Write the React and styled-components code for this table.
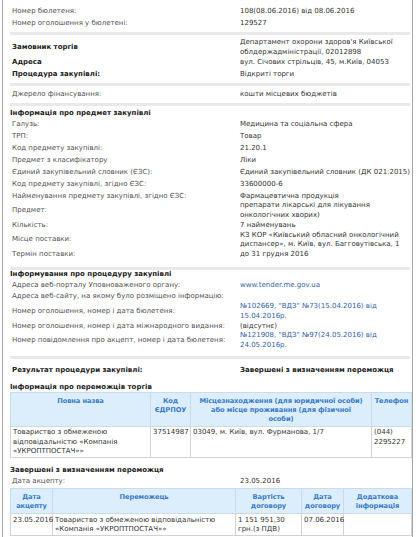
import React from 'react';
import styled, { createGlobalStyle } from 'styled-components';

const Global = createGlobalStyle`
  html, body { margin: 0; padding: 0; background: #fff; }
  body {
    font-family: "DejaVu Sans", Verdana, sans-serif;
    font-size: 7px;
    color: #333;
  }
`;

const Frame = styled.div`
  box-sizing: border-box;
  margin-left: 2px;
  width: 411px;
  min-height: 537px;
  border-left: 1px solid #a6a6a6;
  border-right: 1px solid #a6a6a6;
  padding: 6px 1px 0 7px;
`;

const Fields = styled.div`
  display: grid;
  grid-template-columns: 230px 1fr;
  line-height: 9.6px;
  padding-top: ${p => p.$pt || 0}px;
`;

const Label = styled.div`
  align-self: center;
  padding: 1.2px 0 1.2px 2px;
  white-space: nowrap;
  color: ${p => (p.$strong ? '#222' : '#505050')};
  font-weight: ${p => (p.$strong ? 'bold' : 'normal')};
`;

const Value = styled.div`
  padding: ${p => (p.$multi ? '0' : '1.2px')} 0;
  margin: ${p => (p.$multi && p.$tight ? '-1px' : '0')} 0;
  white-space: nowrap;
  color: ${p => (p.$link ? '#2f64a6' : p.$strong ? '#222' : '#333')};
  font-weight: ${p => (p.$strong ? 'bold' : 'normal')};
`;

const Sep = styled.div`
  height: 3px;
  background: #e9e9e9;
  margin: ${p => p.$mt ?? 2}px 1px ${p => p.$mb ?? 0}px 0;
`;

const Title = styled.div`
  font-weight: bold;
  color: #222;
  line-height: 9.6px;
  white-space: nowrap;
  padding-top: ${p => p.$pt || 0}px;
`;

const Table = styled.table`
  width: 401px;
  border-collapse: collapse;
  table-layout: fixed;
`;

const Th = styled.th`
  background: #dcedfb;
  color: #3b7cc6;
  font-weight: bold;
  font-size: 6.7px;
  text-align: center;
  vertical-align: top;
  white-space: nowrap;
  letter-spacing: -0.1px;
  line-height: 9px;
  padding: 4px 0 2px;
  border: 1px solid #c9dcec;
`;

const Td = styled.td`
  vertical-align: top;
  text-align: left;
  line-height: 9.6px;
  padding: ${p => p.$pt ?? 1}px 2px 0;
  border: 1px solid #d3d3d3;
  color: #333;
  white-space: nowrap;
`;

const Lines = ({ lines }) =>
  lines.map((l, i) => (
    <React.Fragment key={i}>
      {i > 0 && <br />}
      {l}
    </React.Fragment>
  ));

const Row = ({ label, value, strong, strongValue, link, tight }) => {
  const lines = Array.isArray(value) ? value : [value];
  return (
    <>
      <Label $strong={strong}>{label}</Label>
      <Value $multi={lines.length > 1} $tight={tight} $link={link} $strong={strongValue}>
        <Lines lines={lines} />
      </Value>
    </>
  );
};

const subjectRows = [
  ['Галузь:', 'Медицина та соціальна сфера'],
  ['ТРП:', 'Товар'],
  ['Код предмету закупівлі:', '21.20.1'],
  ['Предмет з класифікатору', 'Ліки'],
  ['Єдиний закупівельний словник (ЄЗС):', 'Єдиний закупівельний словник (ДК 021:2015)'],
  ['Код предмету закупівлі, згідно ЄЗС:', '33600000-6'],
  ['Найменування предмету закупівлі, згідно ЄЗС:', 'Фармацевтична продукція'],
  ['Предмет:', ['препарати лікарські для лікування', 'онкологічних хворих)']],
  ['Кількість:', '7 найменувань'],
  [
    'Місце поставки:',
    ['КЗ КОР «Київський обласний онкологічний', 'диспансер», м. Київ, вул. Багговутівська, 1'],
  ],
  ['Термін поставки:', 'до 31 грудня 2016'],
];

const infoRows = [
  ['Адреса веб-порталу Уповноваженого органу:', 'www.tender.me.gov.ua', true],
  ['Адреса веб-сайту, на якому було розміщено інформацію:', ''],
  [
    'Номер оголошення, номер і дата бюлетеня:',
    ['№102669, "ВДЗ" №73(15.04.2016) від', '15.04.2016р.'],
    true,
  ],
  ['Номер оголошення, номер і дата міжнародного видання:', '(відсутнє)'],
  [
    'Номер повідомлення про акцепт, номер і дата бюлетеня:',
    ['№121908, "ВДЗ" №97(24.05.2016) від', '24.05.2016р.'],
    true,
  ],
];

export default function App() {
  return (
    <>
      <Global />
      <Frame>
        <Fields>
          <Row label="Номер бюлетеня:" value="108(08.06.2016) від 08.06.2016" />
          <Row label="Номер оголошення у бюлетені:" value="129527" />
        </Fields>
        <Sep $mb={3} />
        <Fields>
          <Row
            strong
            label="Замовник торгів"
            value={["Департамент охорони здоров'я Київської", 'облдержадміністрації, 02012898']}
          />
          <Row strong label="Адреса" value="вул. Січових стрільців, 45, м.Київ, 04053" />
          <Row strong label="Процедура закупівлі:" value="Відкриті торги" />
        </Fields>
        <Sep $mb={3} />
        <Fields>
          <Row label="Джерело фінансування:" value="кошти місцевих бюджетів" />
        </Fields>
        <Sep />
        <Title $pt={3}>Інформація про предмет закупівлі</Title>
        <Fields>
          {subjectRows.map(([l, v]) => (
            <Row key={l} tight label={l} value={v} />
          ))}
        </Fields>
        <Sep $mt={6} />
        <Title>Інформування про процедуру закупівлі</Title>
        <Fields>
          {infoRows.map(([l, v, link]) => (
            <Row key={l} tight label={l} value={v} link={link} />
          ))}
        </Fields>
        <Sep $mt={6} />
        <Fields $pt={6}>
          <Row
            strong
            strongValue
            label="Результат процедури закупівлі:"
            value="Завершені з визначенням переможця"
          />
        </Fields>
        <Title $pt={6}>Інформація про переможців торгів</Title>
        <Table>
          <colgroup>
            <col style={{ width: 140 }} />
            <col style={{ width: 40 }} />
            <col style={{ width: 181 }} />
            <col style={{ width: 40 }} />
          </colgroup>
          <thead>
            <tr>
              <Th>Повна назва</Th>
              <Th>
                Код
                <br />
                ЄДРПОУ
              </Th>
              <Th>
                Місцезнаходження (для юридичної особи)
                <br />
                або місце проживання (для фізичної
                <br />
                особи)
              </Th>
              <Th>Телефон</Th>
            </tr>
          </thead>
          <tbody>
            <tr>
              <Td>
                Товариство з обмеженою
                <br />
                відповідальністю «Компанія
                <br />
                «УКРОПТПОСТАЧ»»
              </Td>
              <Td>37514987</Td>
              <Td>03049, м. Київ, вул. Фурманова, 1/7</Td>
              <Td>
                (044)
                <br />
                2295227
              </Td>
            </tr>
          </tbody>
        </Table>
        <Title $pt={8}>Завершені з визначенням переможця</Title>
        <Fields>
          <Row label="Дата акцепту:" value="23.05.2016" />
        </Fields>
        <Table>
          <colgroup>
            <col style={{ width: 42 }} />
            <col style={{ width: 183 }} />
            <col style={{ width: 66 }} />
            <col style={{ width: 42 }} />
            <col style={{ width: 68 }} />
          </colgroup>
          <thead>
            <tr>
              <Th>
                Дата
                <br />
                акцепту
              </Th>
              <Th>Переможець</Th>
              <Th>
                Вартість
                <br />
                договору
              </Th>
              <Th>
                Дата
                <br />
                договору
              </Th>
              <Th>
                Додаткова
                <br />
                інформація
              </Th>
            </tr>
          </thead>
          <tbody>
            <tr>
              <Td $pt={2}>23.05.2016</Td>
              <Td $pt={2}>
                Товариство з обмеженою відповідальністю
                <br />
                «Компанія «УКРОПТПОСТАЧ»»
              </Td>
              <Td $pt={2}>
                1 151 951,30
                <br />
                грн.(з ПДВ)
              </Td>
              <Td $pt={2}>07.06.2016</Td>
              <Td $pt={2} />
            </tr>
          </tbody>
        </Table>
      </Frame>
    </>
  );
}
